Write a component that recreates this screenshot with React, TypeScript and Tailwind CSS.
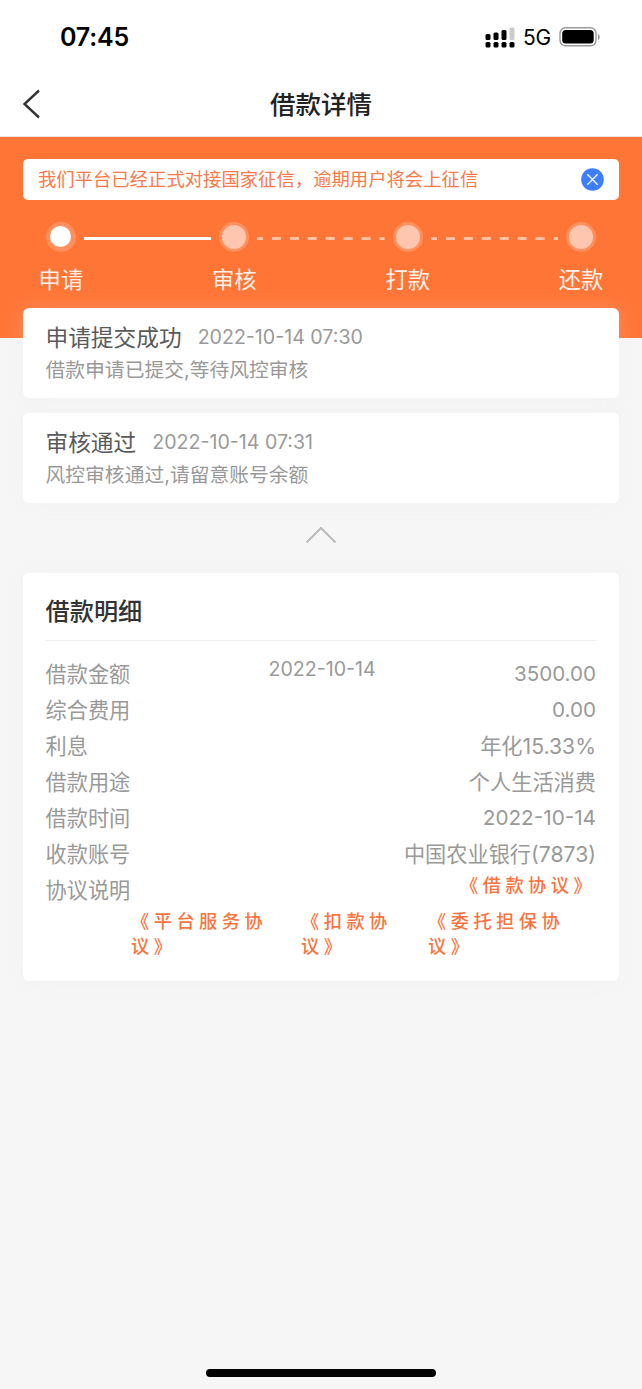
import { Fragment, type ReactNode } from 'react';

const steps = ['申请', '审核', '打款', '还款'];

const logs = [
  { title: '申请提交成功', time: '2022-10-14 07:30', desc: '借款申请已提交,等待风控审核' },
  { title: '审核通过', time: '2022-10-14 07:31', desc: '风控审核通过,请留意账号余额' },
];

const details = [
  { label: '综合费用', value: '0.00' },
  { label: '利息', value: '年化15.33%' },
  { label: '借款用途', value: '个人生活消费' },
  { label: '借款时间', value: '2022-10-14' },
  { label: '收款账号', value: '中国农业银行(7873)' },
];

export default function App() {
  return (
    <div className="flex flex-col w-[642px] h-[1389px] overflow-hidden bg-[#f6f6f6] font-['Inter','Noto_Sans_CJK_SC',sans-serif]">
      <StatusBar />

      {/* Nav bar */}
      <header className="grid grid-cols-[1fr_auto_1fr] items-center h-[63px] px-[22px] bg-white border-b border-[#ece4e0]">
        <svg className="-mt-[2px]" width="20" height="30" viewBox="0 0 20 30" fill="none" stroke="#333" strokeWidth="2.4">
          <path d="M17 1.5 2.5 15 17 28.5" />
        </svg>
        <h1 className="text-[25.5px] leading-[36px] font-medium text-[#222]">借款详情</h1>
      </header>

      {/* Progress banner */}
      <section className="shrink-0 h-[200.5px] px-[23px] pt-[22px] bg-[#ff7536]">
        <div className="flex items-center justify-between h-[40.5px] px-[15px] rounded-[5px] bg-white">
          <p className="pt-[2px] text-[18.35px] text-[#f87a48]">我们平台已经正式对接国家征信，逾期用户将会上征信</p>
          <svg width="23" height="23" viewBox="0 0 23 23">
            <circle cx="11.5" cy="11.5" r="11.3" fill="#3d7eff" />
            <path d="m6.3 6.3 10.4 10.4m0-10.4L6.3 16.7" stroke="#fff" strokeWidth="1.3" />
          </svg>
        </div>
        <Progress />
      </section>

      <main className="flex flex-col pl-[22.5px] pr-[23px] -mt-[30px]">
        <div className="flex flex-col gap-[15px]">
          {logs.map((log) => (
            <Card key={log.title} className="h-[90px] pt-[14px]">
              <div className="flex items-center h-[32px] gap-[16px]">
                <h2 className="pt-[1px] text-[22.7px] text-[#5a5a5a]">{log.title}</h2>
                <span className="text-[19.6px] text-[#999]">{log.time}</span>
              </div>
              <p className="text-[19.8px] leading-[32px] text-[#999]">{log.desc}</p>
            </Card>
          ))}
        </div>

        <svg className="self-center mt-[23px] mb-[29.5px]" width="32" height="18" viewBox="0 0 32 18" fill="none" stroke="#bbb" strokeWidth="2">
          <path d="M1.5 16.5 16 2l14.5 14.5" />
        </svg>

        {/* Loan details */}
        <Card className="h-[408px] pt-[15px]">
          <h2 className="h-[53px] border-b border-[#eee] text-[24.2px] leading-[48px] font-medium text-[#333]">借款明细</h2>
          <div className="pt-[15px] text-[21.2px] leading-[36px] text-[#999]">
            <div className="flex justify-between">
              <span>借款金额</span>
              <span className="text-[19.6px] leading-[27px]">2022-10-14</span>
              <span className="text-[20.6px]">3500.00</span>
            </div>
            {details.map((row) => (
              <div key={row.label} className="flex justify-between">
                <span>{row.label}</span>
                {/^[\d.-]+$/.test(row.value) ? <span className="text-[20.7px]">{row.value}</span> : <span>{row.value}</span>}
              </div>
            ))}
            <div className="flex justify-between">
              <span>协议说明</span>
              <Agreement className="w-[136px]">《借款协议》</Agreement>
            </div>
          </div>
          <div className="flex gap-[30px] pl-[85.5px]">
            <Agreement className="w-[140px]">《平台服务协议》</Agreement>
            <Agreement className="w-[97px]">《扣款协议》</Agreement>
            <Agreement className="w-[140px]">《委托担保协议》</Agreement>
          </div>
        </Card>
      </main>

      <div className="w-[230px] h-[8px] mt-auto mb-[12px] mx-auto rounded-full bg-black" />
    </div>
  );
}

function StatusBar() {
  return (
    <div className="flex items-center justify-between h-[74px] pl-[60px] pr-[41px] pt-[1px] bg-white">
      <span className="text-[25px] tracking-[-0.2px] font-semibold text-black">07:45</span>
      <div className="flex items-center gap-[8px]">
        <svg width="30" height="22" viewBox="0 0 30 22">
          <rect x="0.5" y="7" width="5" height="6" rx="1.5" />
          <rect x="8.5" y="5.5" width="5" height="7.5" rx="1.5" />
          <rect x="16.5" y="3" width="5" height="10" rx="1.5" />
          <rect x="24.5" y="0.5" width="5" height="12.5" rx="1.5" fill="#ccc" />
          <rect x="0.5" y="15" width="5" height="5.5" rx="1.5" />
          <rect x="8.5" y="15" width="5" height="5.5" rx="1.5" />
          <rect x="16.5" y="15" width="5" height="5.5" rx="1.5" />
          <rect x="24.5" y="15" width="5" height="5.5" rx="1.5" />
        </svg>
        <span className="text-[21px] tracking-[-0.2px] text-black">5G</span>
        <svg className="-mt-[2px]" width="42" height="20" viewBox="0 0 42 20">
          <rect x="1" y="0.8" width="36" height="18" rx="5.5" fill="none" stroke="#999" strokeWidth="1.4" />
          <rect x="3.2" y="3" width="31.5" height="13.6" rx="3.5" />
          <path d="M39 7c2.3.8 2.3 5.2 0 6z" fill="#999" />
        </svg>
      </div>
    </div>
  );
}

function Progress() {
  return (
    <div className="flex justify-between pt-[22px] px-[15px]">
      {steps.map((step, i) => (
        <Fragment key={step}>
          {i > 0 && <StepLine done={i === 1} />}
          <div className="flex flex-col items-center w-[46px]">
            <div className="flex items-center justify-center w-[30px] h-[30px] rounded-full bg-white/20">
              <div className={i === 0 ? 'w-[21px] h-[21px] rounded-full bg-white' : 'w-[24px] h-[24px] rounded-full bg-[#ffc6af]'} />
            </div>
            <span className="mt-[10px] text-[22.3px] leading-[36px] text-[#fff0e9]">{step}</span>
          </div>
        </Fragment>
      ))}
    </div>
  );
}

function StepLine({ done }: { done: boolean }) {
  if (done) return <div className="w-[128px] h-[3px] mt-[15px] bg-white" />;
  return (
    <svg className="mt-[15px]" width="128" height="3" viewBox="0 0 128 3">
      <path d="M0 1.5h128" stroke="#ffc0a4" strokeWidth="3" strokeDasharray="9 9" strokeDashoffset="3" />
    </svg>
  );
}

function Card({ className, children }: { className: string; children: ReactNode }) {
  return (
    <div className={`px-[23px] rounded-[6px] bg-white shadow-[0_0_22px_rgba(235,235,235,0.2)] ${className}`}>
      {children}
    </div>
  );
}

function Agreement({ className, children }: { className: string; children: ReactNode }) {
  return (
    <a className={`pt-[0.5px] text-[18.2px] leading-[25px] font-medium tracking-[4.5px] text-[#f9743e] ${className}`}>
      {children}
    </a>
  );
}
